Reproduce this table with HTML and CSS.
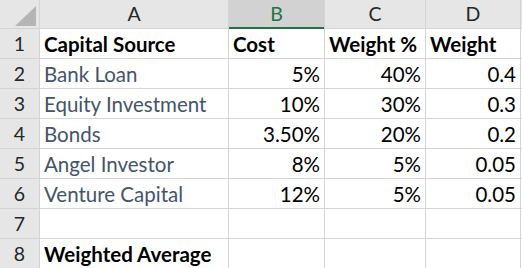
FILE: index.html
```
<!DOCTYPE html>
<html>
<head>
<meta charset="utf-8">
<link rel="stylesheet" href="styles.css">
</head>
<body>
<div class="sheet">
  <div class="corner"><span class="tri"></span></div>
  <div class="colhead">A</div>
  <div class="colhead sel">B</div>
  <div class="colhead">C</div>
  <div class="colhead">D</div>
  <div class="colhead"></div>

  <div class="rowhead">1</div>
  <div class="cell b">Capital Source</div>
  <div class="cell b">Cost</div>
  <div class="cell b">Weight %</div>
  <div class="cell b">Weight</div>
  <div class="cell"></div>

  <div class="rowhead">2</div>
  <div class="cell lbl">Bank Loan</div>
  <div class="cell num">5%</div>
  <div class="cell num">40%</div>
  <div class="cell num">0.4</div>
  <div class="cell"></div>

  <div class="rowhead">3</div>
  <div class="cell lbl">Equity Investment</div>
  <div class="cell num">10%</div>
  <div class="cell num">30%</div>
  <div class="cell num">0.3</div>
  <div class="cell"></div>

  <div class="rowhead">4</div>
  <div class="cell lbl">Bonds</div>
  <div class="cell num">3.50%</div>
  <div class="cell num">20%</div>
  <div class="cell num">0.2</div>
  <div class="cell"></div>

  <div class="rowhead">5</div>
  <div class="cell lbl">Angel Investor</div>
  <div class="cell num">8%</div>
  <div class="cell num">5%</div>
  <div class="cell num">0.05</div>
  <div class="cell"></div>

  <div class="rowhead">6</div>
  <div class="cell lbl">Venture Capital</div>
  <div class="cell num">12%</div>
  <div class="cell num">5%</div>
  <div class="cell num">0.05</div>
  <div class="cell"></div>

  <div class="rowhead">7</div>
  <div class="cell"></div>
  <div class="cell"></div>
  <div class="cell"></div>
  <div class="cell"></div>
  <div class="cell"></div>

  <div class="rowhead">8</div>
  <div class="cell b">Weighted Average</div>
  <div class="cell"></div>
  <div class="cell"></div>
  <div class="cell"></div>
  <div class="cell"></div>
</div>
</body>
</html>
```

FILE: styles.css
```
html, body {
  margin: 0;
  padding: 0;
  background: #ffffff;
  overflow: hidden;
}
.sheet {
  display: grid;
  grid-template-columns: 39px 188px 95px 100px 94px 10px;
  grid-template-rows: 28px repeat(8, 29px);
  gap: 1px;
  background: #d4d4d4;
  width: 531px;
  font-family: Lato, "Liberation Sans", sans-serif;
  font-size: 20.5px;
  color: #000;
}
.corner {
  background: #e6e6e6;
  position: relative;
}
.tri {
  position: absolute;
  left: 15px;
  top: 6px;
  width: 0;
  height: 0;
  border-left: 21px solid transparent;
  border-bottom: 20px solid #b5b5b5;
}
.colhead {
  background: #e6e6e6;
  display: flex;
  align-items: center;
  justify-content: center;
  color: #262626;
  font-size: 19.5px;
  padding-bottom: 1px;
}
.colhead.sel {
  background: #d2d2d2;
  color: #217346;
  border-bottom: 2px solid #217346;
  padding-bottom: 0;
  margin-bottom: -1px;
}
.rowhead {
  background: #e6e6e6;
  display: flex;
  align-items: center;
  justify-content: center;
  color: #262626;
  font-size: 19.5px;
}
.cell {
  background: #ffffff;
  display: flex;
  align-items: center;
  padding: 0 4px;
  white-space: nowrap;
  overflow: hidden;
}
.b {
  font-weight: bold;
}
.lbl {
  color: #44546a;
}
.num {
  justify-content: flex-end;
}
```
